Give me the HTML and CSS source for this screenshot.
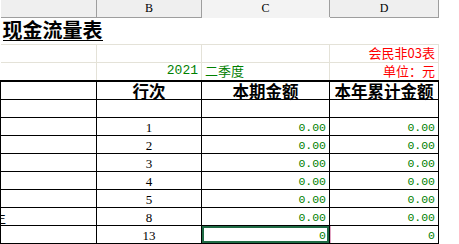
FILE: index.html
```html
<!DOCTYPE html>
<html>
  <head>
    <link rel="stylesheet" href="styles.css">
  </head>
  <body>
    <table class="sheet">
      <colgroup>
        <col class="col-a">
        <col class="col-b">
        <col class="col-c">
        <col class="col-d">
      </colgroup>
      <tr class="letters">
        <th></th>
        <th>B</th>
        <th class="active">C</th>
        <th>D</th>
      </tr>
      <tr class="title-row">
        <td colspan="4" class="title"><span>现金流量表</span></td>
      </tr>
      <tr class="info">
        <td></td>
        <td></td>
        <td></td>
        <td class="red">会民非03表</td>
      </tr>
      <tr class="info last">
        <td></td>
        <td class="green num-right">2021</td>
        <td class="green">二季度</td>
        <td class="red">单位：元</td>
      </tr>
      <tr class="head">
        <td></td>
        <td>行次</td>
        <td>本期金额</td>
        <td>本年累计金额</td>
      </tr>
      <tr class="line">
        <td></td><td></td><td></td><td></td>
      </tr>
      <tr class="line">
        <td></td><td class="no">1</td><td class="amt">0.00</td><td class="amt">0.00</td>
      </tr>
      <tr class="line">
        <td></td><td class="no">2</td><td class="amt">0.00</td><td class="amt">0.00</td>
      </tr>
      <tr class="line">
        <td></td><td class="no">3</td><td class="amt">0.00</td><td class="amt">0.00</td>
      </tr>
      <tr class="line">
        <td></td><td class="no">4</td><td class="amt">0.00</td><td class="amt">0.00</td>
      </tr>
      <tr class="line">
        <td></td><td class="no">5</td><td class="amt">0.00</td><td class="amt">0.00</td>
      </tr>
      <tr class="line">
        <td class="cut">生</td><td class="no">8</td><td class="amt">0.00</td><td class="amt">0.00</td>
      </tr>
      <tr class="line">
        <td></td><td class="no">13</td><td class="amt selected">0</td><td class="amt">0</td>
      </tr>
    </table>
  </body>
</html>
```

FILE: styles.css
```css
body {
  margin: 0;
  background: #fff;
  overflow: hidden;
  font-family: "Noto Sans CJK SC", sans-serif;
}

.sheet {
  border-collapse: collapse;
  table-layout: fixed;
  width: 439px;
}

.col-a { width: 96px; }
.col-b { width: 105px; }
.col-c { width: 128px; }
.col-d { width: 109px; }

.sheet td {
  padding: 0 3px;
  white-space: nowrap;
}

/* column letters */
.letters th {
  height: 17px;
  padding: 0;
  background: #efefef;
  border-right: 1px solid #9e9e9e;
  border-bottom: 1px solid #9e9e9e;
  font-family: "Liberation Serif", serif;
  font-weight: normal;
  font-size: 12px;
  color: #000;
}

.letters th.active {
  background: #f3f3f3;
  border-bottom-color: #f3f3f3;
}

.title-row td {
  height: 26px;
  padding: 0 2px;
  border-bottom: 1px solid #e4e2d8;
  vertical-align: top;
}

.title span {
  display: inline-block;
  margin-top: 2px;
  font-size: 20px;
  font-weight: bold;
  line-height: 19px;
  padding-bottom: 1px;
  border-bottom: 1px solid #000;
}

.info td {
  height: 15px;
  border-right: 1px solid #e4e2d8;
  border-bottom: 1px solid #e4e2d8;
  font-size: 13px;
  line-height: 14px;
  vertical-align: bottom;
  padding-bottom: 2px;
}

.info.last td {
  border-bottom: 2px solid #000;
}

.red {
  color: #f00;
  text-align: right;
}

.green {
  color: #008000;
}

.num-right {
  text-align: right;
  font-family: "Liberation Mono", monospace;
  font-size: 12px;
}

.head td {
  height: 17px;
  border: 1px solid #000;
  border-top: 2px solid #000;
  text-align: center;
  font-size: 16.5px;
  font-weight: bold;
  line-height: 16px;
  vertical-align: bottom;
  padding: 0;
}

.line td {
  height: 17px;
  border: 1px solid #000;
  vertical-align: bottom;
  font-size: 12px;
  line-height: 14px;
}

.line .no {
  text-align: center;
  font-family: "Liberation Serif", serif;
  font-size: 13px;
}

.line .amt {
  text-align: right;
  color: #008000;
  font-family: "Liberation Mono", monospace;
  font-size: 11.5px;
}

.line .cut {
  overflow: hidden;
  text-indent: -7px;
  padding: 0;
  font-size: 12px;
}

.line .selected {
  box-shadow: inset 0 0 0 2px #1f6b45, 0 0 0 1px #e2a6c4;
}
```
